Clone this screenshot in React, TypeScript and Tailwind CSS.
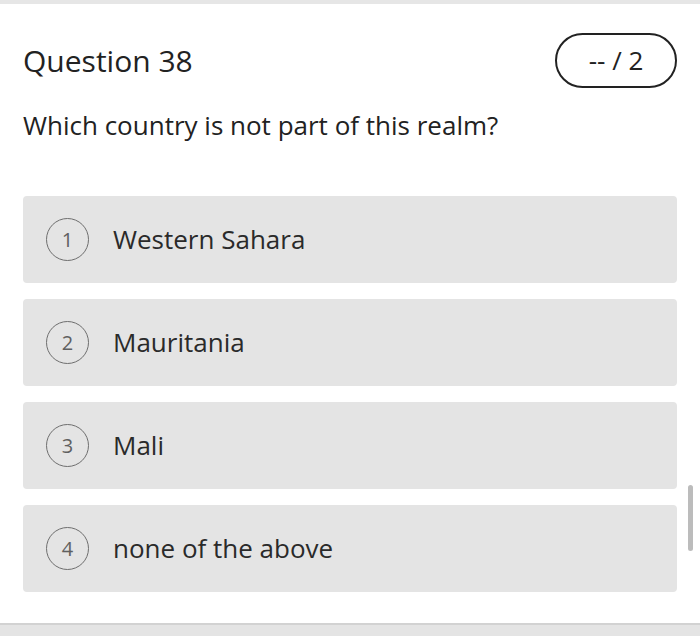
import React from "react";

const options = ["Western Sahara", "Mauritania", "Mali", "none of the above"];

export default function App() {
  return (
    <div
      className="relative w-[700px] h-[636px] bg-white flex flex-col overflow-hidden"
      style={{ fontFamily: '"Open Sans", "Noto Sans", sans-serif' }}
    >
      <div className="h-[4px] bg-[#e6e6e6] shrink-0" />
      <div className="flex-1 px-[23px]">
        <div className="flex items-center justify-between pt-[29px]">
          <h1 className="text-[30px] text-[#222] leading-none">Question 38</h1>
          <div className="w-[122px] h-[55px] border-2 border-[#222] rounded-full flex items-center justify-center text-[26px] text-[#222]">
            -- / 2
          </div>
        </div>
        <p className="mt-[21px] text-[26px] text-[#222] leading-[32px]">
          Which country is not part of this realm?
        </p>
        <div className="mt-[55px] flex flex-col gap-[16px]">
          {options.map((o, i) => (
            <div
              key={o}
              className="h-[87px] bg-[#e4e4e4] rounded-[4px] flex items-center pl-[23px]"
            >
              <div className="w-[43px] h-[43px] rounded-full border-[1.5px] border-[#6e6e6e] flex items-center justify-center text-[20px] text-[#606060]">
                {i + 1}
              </div>
              <span className="ml-[24px] text-[26px] text-[#2a2a2a]">{o}</span>
            </div>
          ))}
        </div>
      </div>
      <div className="absolute right-[7px] top-[485px] w-[5px] h-[66px] rounded-full bg-[#bcbcbc]" />
      <div className="h-[13px] shrink-0 border-t-2 border-[#d2d2d2] bg-[#e4e4e4]" />
    </div>
  );
}
